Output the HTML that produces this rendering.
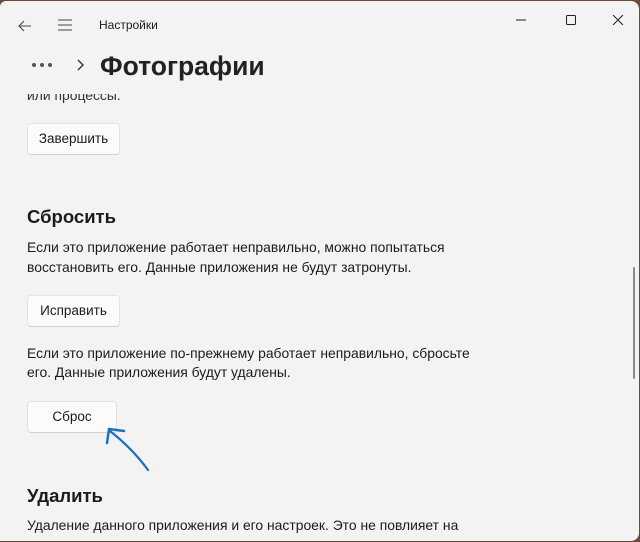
<!DOCTYPE html>
<html><head><meta charset="utf-8"><style>
*{margin:0;padding:0;box-sizing:border-box}
body{width:640px;height:542px;background:#6b4a3a;overflow:hidden;font-family:"Liberation Sans",sans-serif;color:#1b1b1b;position:relative}
.win{position:absolute;left:0;top:1px;width:639px;height:540px;background:#f3f3f3;border-radius:6px 8px 8px 0}
.a{position:absolute;white-space:nowrap}
.t{font-size:13.9px;line-height:20px}
.btn{position:absolute;background:#fbfbfb;border:1px solid #e3e3e3;border-bottom-color:#d0d0d0;border-radius:4px;font-size:13.5px;text-align:center;line-height:30px}
h2{position:absolute;font-size:18.5px;font-weight:bold;white-space:nowrap}
</style></head><body>
<div class="win">
<svg class="a" style="left:17px;top:17px" width="16" height="16" viewBox="0 0 16 16"><path d="M14 8H2M7 3L2 8l5 5" stroke="#444" stroke-width="1" fill="none"/></svg>
<svg class="a" style="left:57px;top:17px" width="16" height="14" viewBox="0 0 16 14"><path d="M1 2h14M1 7h14M1 12h14" stroke="#444" stroke-width="1"/></svg>
<div class="a" style="left:99px;top:17px;font-size:12px">Настройки</div>
<svg class="a" style="left:516px;top:14px" width="110" height="10"><path d="M0 5h10" stroke="#222"/><rect x="50.5" y="0.5" width="9" height="9" fill="none" stroke="#222" rx="1"/><path d="M97 0l10 10M107 0L97 10" stroke="#222"/></svg>
<svg class="a" style="left:31px;top:61px" width="22" height="6"><circle cx="3" cy="3" r="2" fill="#555"/><circle cx="11" cy="3" r="2" fill="#555"/><circle cx="19" cy="3" r="2" fill="#555"/></svg>
<svg class="a" style="left:76px;top:58px" width="8" height="12"><path d="M2 1l5 5-5 5" stroke="#333" stroke-width="1.4" fill="none"/></svg>
<div class="a" style="left:100px;top:50px;font-size:26.5px;font-weight:bold;color:#222">Фотографии</div>
<div class="a t" style="left:27px;top:84px;clip-path:inset(9px 0 0 0);color:#333">или процессы.</div>
<div class="btn" style="left:27px;top:122px;width:93px;height:32px">Завершить</div>
<h2 style="left:27px;top:205px">Сбросить</h2>
<div class="a t" style="left:27px;top:236px">Если это приложение работает неправильно, можно попытаться<br>восстановить его. Данные приложения не будут затронуты.</div>
<div class="btn" style="left:27px;top:294px;width:93px;height:32px">Исправить</div>
<div class="a t" style="left:27px;top:343px;line-height:19px">Если это приложение по-прежнему работает неправильно, сбросьте<br>его. Данные приложения будут удалены.</div>
<div class="btn" style="left:27px;top:400px;width:90px;height:32px">Сброс</div>
<svg class="a" style="left:100px;top:420px" width="60" height="55"><path d="M48 49C40 38 28 24 10 10" stroke="#1e6fc0" stroke-width="2.2" fill="none" stroke-linecap="round"/><path d="M7 22L9 8 24 10" stroke="#1e6fc0" stroke-width="2.5" fill="none" stroke-linecap="round" stroke-linejoin="round"/></svg>
<h2 style="left:27px;top:484px">Удалить</h2>
<div class="a t" style="left:27px;top:514px">Удаление данного приложения и его настроек. Это не повлияет на</div>
<div class="a" style="left:633px;top:266px;width:2px;height:112px;background:#8a8a8a;border-radius:1px"></div>
</div>
</body></html>
